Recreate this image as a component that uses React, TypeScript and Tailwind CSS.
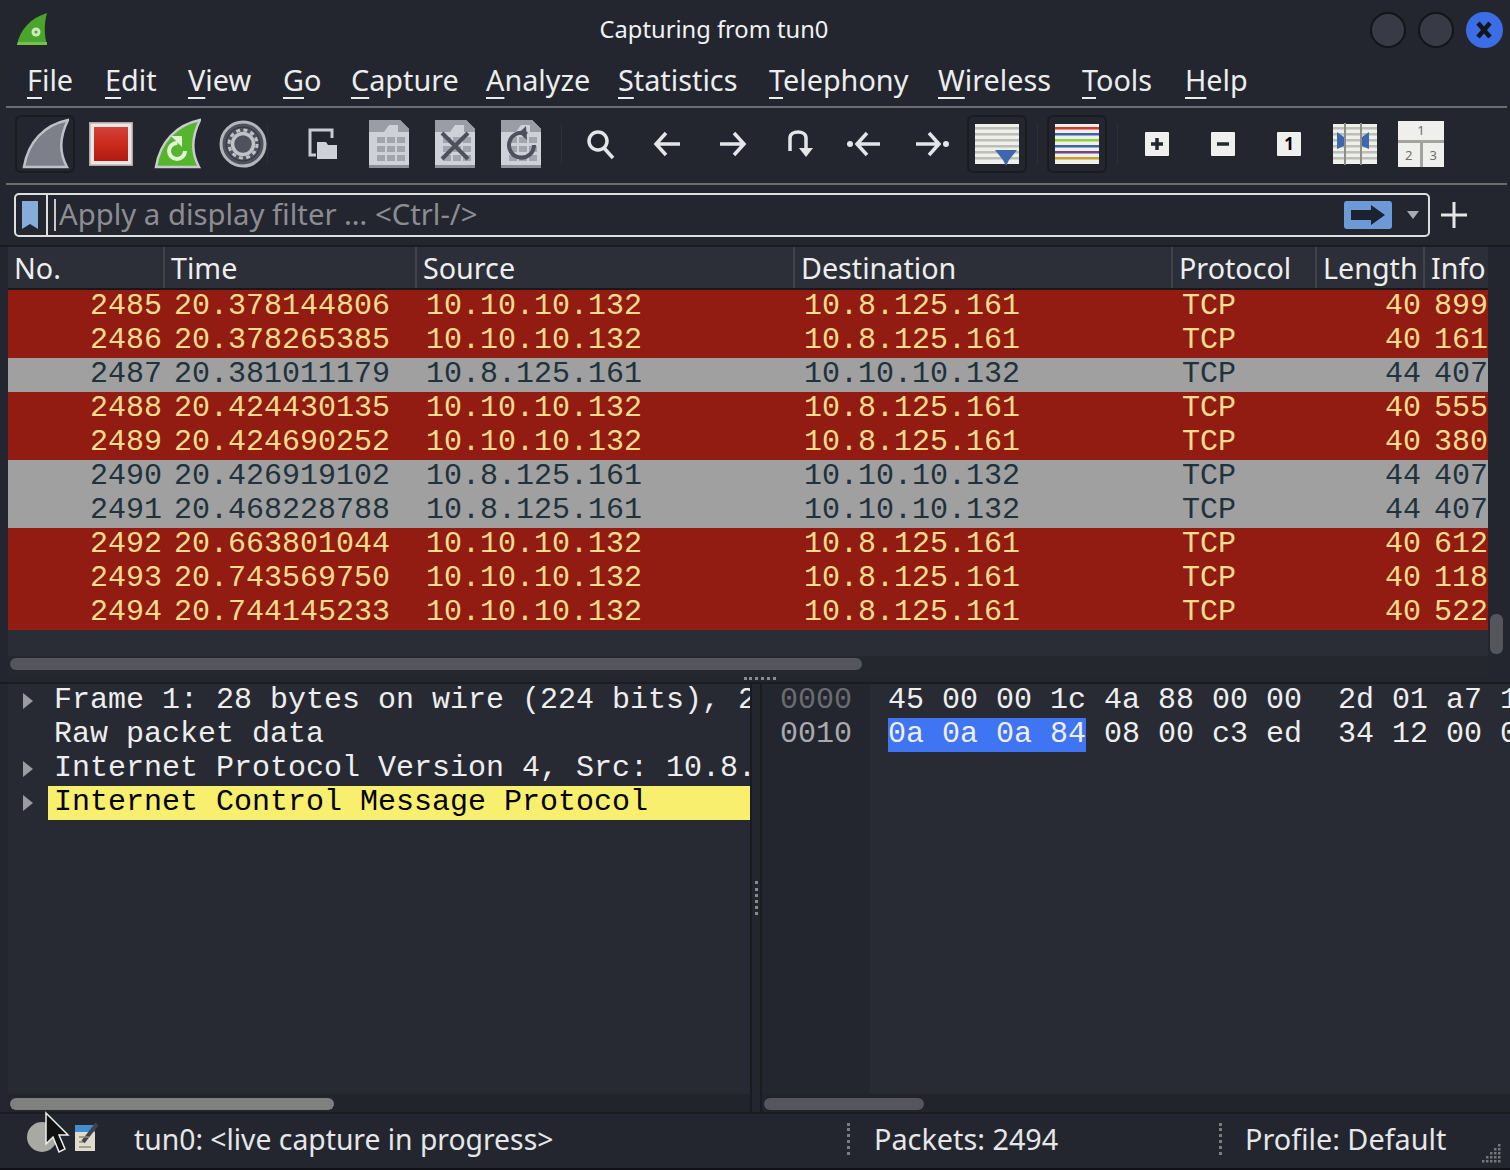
const ui = "font-['Noto_Sans',sans-serif]";
const mono = "font-['Liberation_Mono',monospace]";

const menus = [
    { label: "File", w: "w-[78px]" },
    { label: "Edit", w: "w-[83px]" },
    { label: "View", w: "w-[95px]" },
    { label: "Go", w: "w-[68px]" },
    { label: "Capture", w: "w-[135px]" },
    { label: "Analyze", w: "w-[132px]" },
    { label: "Statistics", w: "w-[151px]" },
    { label: "Telephony", w: "w-[169px]" },
    { label: "Wireless", w: "w-[144px]" },
    { label: "Tools", w: "w-[103px]" },
    { label: "Help", w: "w-[70px]" },
];

type Packet = { no: number; time: string; src: string; dst: string; len: number; info: string };

const A = "10.10.10.132";
const B = "10.8.125.161";

const packets: Packet[] = [
    { no: 2485, time: "20.378144806", src: A, dst: B, len: 40, info: "899" },
    { no: 2486, time: "20.378265385", src: A, dst: B, len: 40, info: "161" },
    { no: 2487, time: "20.381011179", src: B, dst: A, len: 44, info: "407" },
    { no: 2488, time: "20.424430135", src: A, dst: B, len: 40, info: "555" },
    { no: 2489, time: "20.424690252", src: A, dst: B, len: 40, info: "380" },
    { no: 2490, time: "20.426919102", src: B, dst: A, len: 44, info: "407" },
    { no: 2491, time: "20.468228788", src: B, dst: A, len: 44, info: "407" },
    { no: 2492, time: "20.663801044", src: A, dst: B, len: 40, info: "612" },
    { no: 2493, time: "20.743569750", src: A, dst: B, len: 40, info: "118" },
    { no: 2494, time: "20.744145233", src: A, dst: B, len: 40, info: "522" },
];

const headers = [
    { label: "No.", w: "w-[157px]" },
    { label: "Time", w: "w-[252px]" },
    { label: "Source", w: "w-[378px]" },
    { label: "Destination", w: "w-[378px]" },
    { label: "Protocol", w: "w-[144px]" },
    { label: "Length", w: "w-[108px]" },
    { label: "Info", w: "w-[63px]" },
];

function Fin({ fill, edge }: { fill: string; edge: string }) {
    return <path d="M3 49C7 24 23 7 47 2C39 18 37 33 46 49Z" fill={fill} stroke={edge} strokeWidth="2.5" />;
}

function FileIcon({ children }: { children?: React.ReactNode }) {
    const cells = [];
    for (let y = 17; y < 42; y += 9) {
        for (let x = 8; x < 30; x += 10) {
            cells.push(<rect key={`${x}-${y}`} x={x} y={y} width="8" height="6" fill="#a2a5ad" />);
        }
    }
    return (
        <svg width="40" height="48" viewBox="0 0 40 48">
            <path d="M0 0H31L40 9V48H0Z" fill="#cfd1d8" />
            <path d="M0 0H31L40 9V12H0Z" fill="#9a9da6" />
            <path d="M15 12L20 5H29V12Z" fill="#cfd1d8" />
            <path d="M0 45H40V48H0Z" fill="#8c8f98" />
            {cells}
            {children}
        </svg>
    );
}

function ListLines({ colors }: { colors: string[] }) {
    return (
        <svg width="44" height="40" viewBox="0 0 44 40">
            <rect width="44" height="40" fill="#efefeb" />
            {colors.map((c, i) => (
                <rect key={i} y={3 + i * 6} width="44" height="2.5" fill={c} />
            ))}
        </svg>
    );
}

function ZoomBox({ children }: { children: React.ReactNode }) {
    return (
        <div className={`w-6 h-6 bg-[#efefed] rounded-[1px] flex items-center justify-center text-black text-[17px] font-bold ${ui}`}>
            {children}
        </div>
    );
}

function Nav({ d }: { d: string }) {
    return (
        <svg width="32" height="32" viewBox="0 0 32 32" fill="none" stroke="#e4e5e8" strokeWidth="3.5">
            <path d={d} />
        </svg>
    );
}

function Slot({ children, framed }: { children: React.ReactNode; framed?: boolean }) {
    return (
        <div className="w-[66px] h-full flex items-center justify-center">
            {framed ? (
                <div className="w-[60px] h-[58px] border-2 border-[#191b21] rounded-[6px] flex items-center justify-center">{children}</div>
            ) : (
                children
            )}
        </div>
    );
}

function Sep({ className = "" }: { className?: string }) {
    return (
        <div className="w-[14px] h-full flex justify-center items-center">
            <div className={`w-[1px] h-[40px] bg-[#2c2f38] ${className}`} />
        </div>
    );
}

function Toolbar() {
    return (
        <div className="h-[75px] flex items-center pl-[12px] pb-[3px] shrink-0">
            <Slot framed>
                <svg width="48" height="52" viewBox="0 0 48 52"><Fin fill="#7d808a" edge="#bfc1c7" /></svg>
            </Slot>
            <Slot>
                <svg width="44" height="44" viewBox="0 0 44 44">
                    <defs>
                        <linearGradient id="stopRed" x1="0" y1="0" x2="0" y2="1">
                            <stop offset="0" stopColor="#d2423a" />
                            <stop offset="0.5" stopColor="#cc2a1c" />
                            <stop offset="1" stopColor="#ae1a12" />
                        </linearGradient>
                    </defs>
                    <rect width="44" height="44" fill="#a8a8a8" />
                    <rect x="1.5" y="1.5" width="41" height="41" fill="#eee6e4" />
                    <rect x="5" y="5" width="34" height="34" fill="url(#stopRed)" />
                </svg>
            </Slot>
            <Slot>
                <svg width="48" height="52" viewBox="0 0 48 52">
                    <Fin fill="#55b52c" edge="#c9cbcf" />
                    <circle cx="24" cy="33" r="8" fill="none" stroke="#e6f3dc" strokeWidth="4" strokeDasharray="38 12" />
                    <path d="M18 18H29V29Z" fill="#e6f3dc" />
                </svg>
            </Slot>
            <Slot>
                <svg width="48" height="48" viewBox="0 0 48 48">
                    <circle cx="24" cy="24" r="22" fill="#4f525c" stroke="#b4b6bc" strokeWidth="3" />
                    <circle cx="24" cy="24" r="17" fill="none" stroke="#30333c" strokeWidth="1" />
                    <circle cx="24" cy="24" r="10.5" fill="#4f525c" stroke="#c0c2c8" strokeWidth="3.5" />
                    <circle cx="24" cy="24" r="14" fill="none" stroke="#c0c2c8" strokeWidth="3" strokeDasharray="4 3.33" />
                </svg>
            </Slot>
            <Sep className="-translate-x-[16px]" />
            <Slot>
                <svg width="30" height="32" viewBox="0 0 30 32">
                    <path d="M8 27H2V2H24V10" fill="none" stroke="#c8cad1" strokeWidth="3" />
                    <path d="M9 14H18L20 17H29V31H9Z" fill="#cfd1d8" />
                </svg>
            </Slot>
            <Slot><FileIcon /></Slot>
            <Slot>
                <FileIcon>
                    <path d="M7 13L33 39M33 13L7 39" stroke="#4e515b" strokeWidth="4" />
                </FileIcon>
            </Slot>
            <Slot>
                <FileIcon>
                    <path d="M26 14A12.5 12.5 0 1 0 33 25" fill="none" stroke="#4e515b" strokeWidth="4" />
                    <path d="M25 6L18 13L26 20Z" fill="#4e515b" />
                </FileIcon>
            </Slot>
            <Sep />
            <Slot>
                <svg width="32" height="32" viewBox="0 0 32 32" fill="none" stroke="#e4e5e8" strokeWidth="3.5">
                    <circle cx="13" cy="13" r="9" />
                    <path d="M19 20L28 30" />
                </svg>
            </Slot>
            <Slot><Nav d="M15 5L5 16L15 27M5 16H29" /></Slot>
            <Slot><Nav d="M17 5L27 16L17 27M3 16H27" /></Slot>
            <Slot>
                <svg width="32" height="32" viewBox="0 0 32 32" fill="none" stroke="#e4e5e8" strokeWidth="3.5">
                    <path d="M7 23V10C7 2 23 2 23 10V22" />
                    <path d="M16 20H30L23 29Z" fill="#e4e5e8" stroke="none" />
                </svg>
            </Slot>
            <Slot>
                <svg width="36" height="32" viewBox="0 0 36 32" fill="none" stroke="#e4e5e8" strokeWidth="3.5">
                    <circle cx="3" cy="16" r="3" fill="#e4e5e8" stroke="none" />
                    <path d="M20 5L10 16L20 27M10 16H33" />
                </svg>
            </Slot>
            <Slot>
                <svg width="36" height="32" viewBox="0 0 36 32" fill="none" stroke="#e4e5e8" strokeWidth="3.5">
                    <circle cx="33" cy="16" r="3" fill="#e4e5e8" stroke="none" />
                    <path d="M16 5L26 16L16 27M3 16H26" />
                </svg>
            </Slot>
            <Slot framed>
                <div className="relative leading-none">
                    <ListLines colors={["#bdbeb5", "#bdbeb5", "#bdbeb5", "#bdbeb5", "#bdbeb5", "#bdbeb5"]} />
                    <svg className="absolute left-[20px] top-[26px]" width="22" height="16" viewBox="0 0 22 16">
                        <path d="M0 0H22L14 10L11 16L8 10Z" fill="#3e68ad" />
                    </svg>
                </div>
            </Slot>
            <Sep />
            <Slot framed>
                <ListLines colors={["#d8372c", "#3c62a8", "#8ed13c", "#3c62a8", "#6d4a7e", "#c5a02f"]} />
            </Slot>
            <Sep />
            <Slot>
                <ZoomBox>
                    <svg width="14" height="14" viewBox="0 0 14 14"><path d="M7 1V13M1 7H13" stroke="#23262f" strokeWidth="3.5" /></svg>
                </ZoomBox>
            </Slot>
            <Slot>
                <ZoomBox>
                    <svg width="14" height="14" viewBox="0 0 14 14"><path d="M1 7H13" stroke="#23262f" strokeWidth="3.5" /></svg>
                </ZoomBox>
            </Slot>
            <Slot><ZoomBox>1</ZoomBox></Slot>
            <Slot>
                <svg width="44" height="42" viewBox="0 0 44 42">
                    <rect y="1" width="44" height="40" fill="#efefeb" />
                    {[4, 10, 16, 22, 28, 34].map((y) => (
                        <rect key={y} y={y} width="44" height="2.5" fill="#bdbeb5" />
                    ))}
                    <rect x="11" width="2" height="42" fill="#8d8e88" />
                    <rect x="27" width="2" height="42" fill="#8d8e88" />
                    <path d="M4 9L11 14V23L4 26ZM36 9L29 14V23L36 26Z" fill="#3e68ad" />
                </svg>
            </Slot>
            <Slot>
                <div className={`w-[46px] h-[46px] bg-[#efefeb] flex flex-col text-[#6e6f6b] text-[13px] leading-none ${ui}`}>
                    <div className="h-[22px] flex items-center justify-center border-b-[3px] border-[#a3a49e]">1</div>
                    <div className="flex flex-1">
                        <div className="flex-1 flex items-center justify-center border-r-[3px] border-[#a3a49e]">2</div>
                        <div className="flex-1 flex items-center justify-center">3</div>
                    </div>
                </div>
            </Slot>
        </div>
    );
}

function PacketRow({ p }: { p: Packet }) {
    const red = p.src === A;
    return (
        <div className={`h-[34px] flex items-start whitespace-pre ${mono} text-[30px] leading-[32px] ${red ? "bg-[#921c12] text-[#f6dc8d]" : "bg-[#a0a0a0] text-[#20323c]"}`}>
            <div className="w-[154px] text-right">{p.no}</div>
            <div className="w-[251px] pl-[12px]">{p.time}</div>
            <div className="w-[378px] pl-[13px]">{p.src}</div>
            <div className="w-[378px] pl-[13px]">{p.dst}</div>
            <div className="w-[136px] pl-[13px]">TCP</div>
            <div className="w-[116px] text-right">{p.len}</div>
            <div className="flex-1 pl-[13px] overflow-hidden">{p.info}</div>
        </div>
    );
}

function Arrow() {
    return (
        <svg width="12" height="20" viewBox="0 0 12 20">
            <path d="M1 2L11 10L1 18Z" fill="#9a9ca2" />
        </svg>
    );
}

function TreeRow({ text, arrow, hit }: { text: string; arrow?: boolean; hit?: boolean }) {
    return (
        <div className="h-[34px] flex items-center">
            <div className="w-[40px] pl-[14px] shrink-0 flex items-center">{arrow && <Arrow />}</div>
            <div className={`flex-1 h-full pl-[6px] overflow-hidden whitespace-pre ${hit ? "bg-[#f8ef6e] text-black" : "text-[#eeeeee]"}`}>{text}</div>
        </div>
    );
}

export default function App() {
    return (
        <div className="w-[1510px] h-[1170px] bg-[#23262f] flex flex-col overflow-hidden relative">
            {/* title bar */}
            <div className="h-[60px] shrink-0 flex items-center justify-between pl-[17px] pr-[7px]">
                <svg width="34" height="34" viewBox="0 0 34 34">
                    <path d="M0 32C3 16 14 5 30 0C27 11 27 22 30 32Z" fill="#4aa52c" />
                    <path d="M0 32H30V29H1Z" fill="#73c04f" />
                    <circle cx="19" cy="19" r="4.5" fill="#cfe8bd" />
                    <circle cx="19" cy="19" r="1.5" fill="#4aa52c" />
                </svg>
                <div className={`${ui} text-[#f1f2f4] text-[23.7px] ml-[7px]`}>Capturing from tun0</div>
                <div className="flex gap-[12px] items-center">
                    <div className="w-[36px] h-[36px] rounded-full bg-[#383b46] border-2 border-[#14151a]" />
                    <div className="w-[36px] h-[36px] rounded-full bg-[#383b46] border-2 border-[#14151a]" />
                    <div className="w-[37px] h-[36px] rounded-full bg-[#3b6ee6] flex items-center justify-center">
                        <svg width="18" height="20" viewBox="0 0 18 20"><path d="M3 3L15 17M15 3L3 17" stroke="#14151a" strokeWidth="4.5" /></svg>
                    </div>
                </div>
            </div>

            {/* menu */}
            <div className={`h-[46px] shrink-0 flex items-center pl-[27px] pb-[6px] ${ui} text-[28.8px] text-[#eceded]`}>
                {menus.map((m) => (
                    <div key={m.label} className={m.w}>
                        <span className="underline underline-offset-[6px] decoration-2">{m.label[0]}</span>{m.label.slice(1)}
                    </div>
                ))}
            </div>
            <div className="h-[2px] ml-[6px] mr-[3px] bg-[#6c6d70] shrink-0" />

            <Toolbar />
            <div className="h-[2px] ml-[6px] mr-[3px] bg-[#6c6d70] shrink-0" />

            {/* display filter */}
            <div className="h-[60px] shrink-0 flex items-center pl-[14px]">
                <div className="w-[1416px] h-[44px] border-2 border-[#dedede] rounded-[5px] flex items-center">
                    <div className="w-[32px] h-full border-r-2 border-[#dedede] pl-[6px] flex items-center">
                        <svg width="16" height="28" viewBox="0 0 16 28"><path d="M0 0H16V28L8 23L0 28Z" fill="#86add9" /></svg>
                    </div>
                    <div className="w-[2px] h-[32px] ml-[6px] bg-[#c8c8c8]" />
                    <div className={`flex-1 pl-[3px] ${ui} text-[29.3px] text-[#8b8d92] whitespace-pre`}>Apply a display filter … {"<Ctrl-/>"}</div>
                    <div className="w-[48px] h-[28px] bg-[#6c9ad6] rounded-[3px] flex items-center justify-center">
                        <svg width="36" height="20" viewBox="0 0 36 20"><path d="M1 5H21V0L35 10L21 20V15H1Z" fill="#1d2230" /></svg>
                    </div>
                    <svg className="ml-[14px] mr-[8px]" width="14" height="10" viewBox="0 0 14 10"><path d="M1 1H13L7 9Z" fill="#a9abaf" /></svg>
                </div>
                <svg className="ml-[11px]" width="26" height="26" viewBox="0 0 26 26"><path d="M13 0V26M0 13H26" stroke="#e6e6e6" strokeWidth="3" /></svg>
            </div>

            {/* packet list */}
            <div className="h-[431px] shrink-0 border-t-2 border-[#1a1c22] flex pl-[8px]">
                <div className="w-[1480px] flex flex-col bg-[#2a2d36]">
                    <div className={`h-[43px] shrink-0 flex bg-[#2c2f38] border-b-2 border-[#17181d] ${ui} text-[28.7px] text-[#eeeeee]`}>
                        {headers.map((h) => (
                            <div key={h.label} className={`${h.w} shrink-0 pl-[6px] h-full flex items-center border-r-2 border-[#40434c] last:border-r-0 overflow-hidden whitespace-pre`}>
                                {h.label}
                            </div>
                        ))}
                    </div>
                    {packets.map((p) => (
                        <PacketRow key={p.no} p={p} />
                    ))}
                    <div className="h-[26px] shrink-0" />
                    <div className="h-[20px] shrink-0 bg-[#25272f] pl-[2px] pt-[2px]">
                        <div className="w-[852px] h-[12px] rounded-[6px] bg-[#54565c]" />
                    </div>
                </div>
                <div className="w-[22px] pl-[2px] flex flex-col">
                    <div className="h-[367px] shrink-0" />
                    <div className="w-[13px] h-[40px] rounded-[6px] bg-[#54565c]" />
                </div>
            </div>

            {/* splitter */}
            <div className="h-[6px] shrink-0 flex justify-center items-start pl-[9px]">
                <div className="w-[32px] h-[3px] mt-[1px] border-t-[3px] border-dotted border-[#8a8b8f]" />
            </div>

            {/* details + bytes */}
            <div className="flex-1 min-h-0 flex pl-[8px] border-t-2 border-[#1a1c22]">
                <div className="w-[744px] shrink-0 flex flex-col border-r-2 border-[#191b20]">
                    <div className={`flex-1 min-h-0 ${mono} text-[30px] leading-[32px] bg-[#272a33]`}>
                        <TreeRow arrow text="Frame 1: 28 bytes on wire (224 bits), 28 bytes" />
                        <TreeRow text="Raw packet data" />
                        <TreeRow arrow text="Internet Protocol Version 4, Src: 10.8.125.161" />
                        <TreeRow arrow hit text="Internet Control Message Protocol" />
                    </div>
                    <div className="h-[18px] shrink-0 pl-[2px] pt-[4px] bg-[#22242c]">
                        <div className="w-[324px] h-[12px] rounded-[6px] bg-[#7f7f7f]" />
                    </div>
                </div>
                <div className="w-[8px] shrink-0 flex items-center justify-center">
                    <div className="w-[3px] h-[34px] border-l-[3px] border-dotted border-[#8a8b8f]" />
                </div>
                <div className="flex-1 min-w-0 flex flex-col border-l-2 border-[#191b20]">
                    <div className={`flex-1 min-h-0 flex ${mono} text-[30px] leading-[32px] overflow-hidden whitespace-pre`}>
                        <div className="w-[108px] shrink-0 bg-[#23262e] pl-[18px]">
                            <div className="h-[34px] text-[#6a6c72]">0000</div>
                            <div className="h-[34px] text-[#a9abaf]">0010</div>
                        </div>
                        <div className="flex-1 min-w-0 bg-[#282b34] pl-[18px] text-[#efefef]">
                            <div className="h-[34px]">45 00 00 1c 4a 88 00 00  2d 01 a7 1</div>
                            <div className="h-[34px]"><span className="bg-[#3f74f2] inline-block h-[34px]">0a 0a 0a 84</span> 08 00 c3 ed  34 12 00 0</div>
                        </div>
                    </div>
                    <div className="h-[18px] shrink-0 pl-[2px] pt-[4px] bg-[#22242c]">
                        <div className="w-[160px] h-[12px] rounded-[6px] bg-[#54565c]" />
                    </div>
                </div>
            </div>

            {/* status bar */}
            <div className={`h-[58px] shrink-0 border-t-2 border-[#1a1c22] pb-[6px] flex items-center ${ui} text-[28.8px] text-[#e6e7e8]`}>
                <div className="w-[134px] pl-[27px] shrink-0 flex items-center gap-[18px] -mt-[4px]">
                    <div className="w-[30px] h-[30px] rounded-full bg-[#a8a9a2]" />
                    <svg width="24" height="30" viewBox="0 0 24 30">
                        <rect y="3" width="20" height="26" fill="#dedcca" />
                        <rect y="3" width="20" height="7" fill="#3f8fd2" />
                        <path d="M8 20L22 2" stroke="#41434a" strokeWidth="4" />
                        <path d="M4 15H14M4 20H8M4 25H16" stroke="#8d8c7e" strokeWidth="1.5" />
                    </svg>
                </div>
                <div className="w-[713px] shrink-0 text-[28.3px]">tun0: {"<live capture in progress>"}</div>
                <div className="w-[27px] h-[32px] shrink-0 border-l-[3px] border-dotted border-[#7b7d82]" />
                <div className="w-[345px] shrink-0">Packets: 2494</div>
                <div className="w-[26px] h-[32px] shrink-0 border-l-[3px] border-dotted border-[#7b7d82]" />
                <div>Profile: Default</div>
            </div>
            <div className="h-[2px] shrink-0 bg-[#101116] -mt-[2px]" />

            {/* mouse cursor over the status bar */}
            <svg className="absolute left-[44px] top-[1111px]" width="26" height="44" viewBox="0 0 26 44">
                <path d="M2 2V33L9 26L15 41L21 38L15 24H24Z" fill="#111" stroke="#eee" strokeWidth="1.5" />
            </svg>
            <svg className="absolute left-[1480px] top-[1140px]" width="24" height="24" viewBox="0 0 24 24" fill="#74767b">
                {[[18,4],[14,8],[18,8],[10,12],[14,12],[18,12],[6,16],[10,16],[14,16],[18,16],[2,20],[6,20],[10,20],[14,20],[18,20]].map(([x, y]) => (
                    <rect key={`${x}-${y}`} x={x} y={y} width="2.5" height="2.5" />
                ))}
            </svg>
        </div>
    );
}
